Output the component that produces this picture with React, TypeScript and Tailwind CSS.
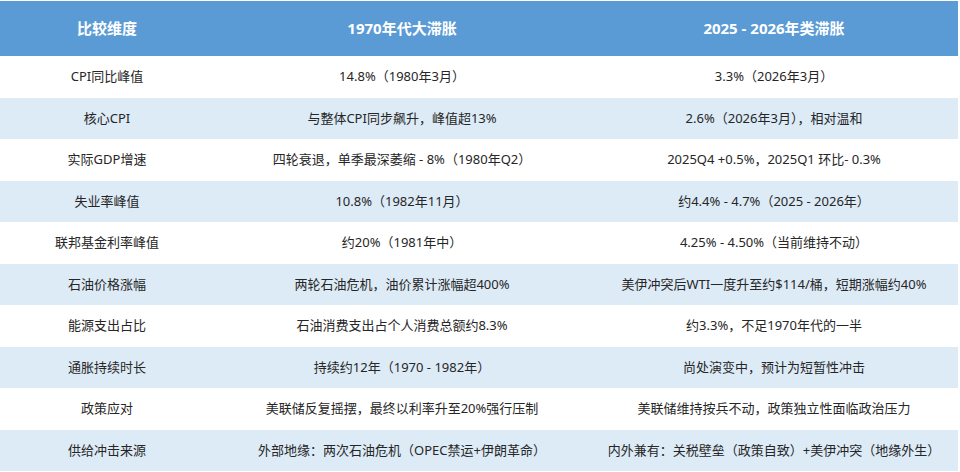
const ROWS = [
  ['CPI同比峰值', '14.8%（1980年3月）', '3.3%（2026年3月）'],
  ['核心CPI', '与整体CPI同步飙升，峰值超13%', '2.6%（2026年3月），相对温和'],
  ['实际GDP增速', '四轮衰退，单季最深萎缩 - 8%（1980年Q2）', '2025Q4 +0.5%，2025Q1 环比- 0.3%'],
  ['失业率峰值', '10.8%（1982年11月）', '约4.4% - 4.7%（2025 - 2026年）'],
  ['联邦基金利率峰值', '约20%（1981年中）', '4.25% - 4.50%（当前维持不动）'],
  ['石油价格涨幅', '两轮石油危机，油价累计涨幅超400%', '美伊冲突后WTI一度升至约$114/桶，短期涨幅约40%'],
  ['能源支出占比', '石油消费支出占个人消费总额约8.3%', '约3.3%，不足1970年代的一半'],
  ['通胀持续时长', '持续约12年（1970 - 1982年）', '尚处演变中，预计为短暂性冲击'],
  ['政策应对', '美联储反复摇摆，最终以利率升至20%强行压制', '美联储维持按兵不动，政策独立性面临政治压力'],
  ['供给冲击来源', '外部地缘：两次石油危机（OPEC禁运+伊朗革命）', '内外兼有：关税壁垒（政策自致）+美伊冲突（地缘外生）'],
]

export default function App() {
  return (
    <div
      className="h-[472px] w-[960px] overflow-hidden bg-white pt-px"
      style={{ fontFamily: '"Noto Sans", "Noto Sans CJK SC", sans-serif' }}
    >
      <div className="w-[958px]">
        <div className="grid h-[55px] grid-cols-[214px_376px_368px] items-center bg-[#5b9bd5] text-[15px] font-bold text-white">
          <div className="text-center">比较维度</div>
          <div className="text-center">1970年代大滞胀</div>
          <div className="text-center">2025 - 2026年类滞胀</div>
        </div>
        {ROWS.map((row, i) => (
          <div
            key={row[0]}
            className={`grid h-[41.5px] grid-cols-[214px_376px_368px] items-center text-[13px] text-[#262626] ${
              i % 2 === 1 ? 'bg-[#ddebf7]' : 'bg-white'
            }`}
          >
            {row.map((cell, j) => (
              <div key={j} className="text-center whitespace-nowrap">
                {cell}
              </div>
            ))}
          </div>
        ))}
      </div>
    </div>
  )
}
